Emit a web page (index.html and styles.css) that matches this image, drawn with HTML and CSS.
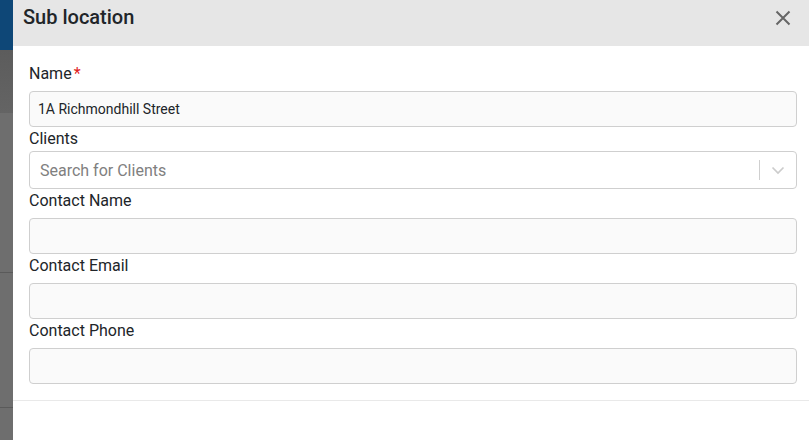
FILE: index.html
```html
<!DOCTYPE html>
<html lang="en">
<head>
    <meta charset="UTF-8">
    <title>Sub location</title>
    <link rel="stylesheet" href="styles.css">
</head>
<body>
<div class="page">
    <div class="backdrop">
        <div class="bd-nav"></div>
        <div class="bd-bar"></div>
        <div class="bd-row bd-row-1"></div>
        <div class="bd-row"></div>
        <div class="bd-rest"></div>
    </div>
    <div class="modal">
        <div class="modal-head">
            <h4 class="modal-title">Sub location</h4>
            <a href="javascript:;" class="close">
                <svg width="16" height="16" viewBox="0 0 16 16"><path d="M1.5 1.5L14.5 14.5M14.5 1.5L1.5 14.5" stroke="#666" stroke-width="2" fill="none"/></svg>
            </a>
        </div>
        <div class="modal-body">
            <label class="label">Name<span class="req">*</span></label>
            <input class="field" type="text" value="1A Richmondhill Street">

            <label class="label label-tight">Clients</label>
            <div class="select">
                <span class="placeholder">Search for Clients</span>
                <span class="sep"></span>
                <span class="chevron">
                    <svg width="20" height="20" viewBox="0 0 20 20"><path d="M4.5 7.5l5.5 5.5 5.5-5.5" stroke="#ccc" stroke-width="1.7" fill="none"/></svg>
                </span>
            </div>

            <label class="label">Contact Name</label>
            <input class="field" type="text">

            <label class="label">Contact Email</label>
            <input class="field" type="text">

            <label class="label">Contact Phone</label>
            <input class="field" type="text">
        </div>
        <div class="modal-foot"></div>
    </div>
</div>
</body>
</html>
```

FILE: styles.css
```css
*{margin:0;padding:0;box-sizing:border-box;}
html,body{height:100%;}
body{
    overflow:hidden;
    font-family:Roboto,"Liberation Sans",sans-serif;
    color:#212529;
    background:#fff;
}
.page{display:flex;height:440px;}

/* dimmed page behind the dialog */
.backdrop{width:13px;flex-shrink:0;display:flex;flex-direction:column;background:#6e6e6e;}
.bd-nav{height:50px;background:#0e4777;}
.bd-bar{height:63px;background:linear-gradient(#5c5c5c,#646464);}
.bd-row{height:135px;border-bottom:1px solid #5a5a5a;}
.bd-row-1{height:160px;}
.bd-rest{flex:1;}

.modal{width:800px;flex-shrink:0;display:flex;flex-direction:column;background:#fff;}
.modal-head{
    height:46px;
    background:#e6e6e6;
    display:flex;
    align-items:flex-start;
    justify-content:space-between;
    padding:2px 22px 0 10px;
}
.modal-title{font-size:20px;font-weight:500;line-height:30px;color:#212529;}
.close{display:block;margin-top:8px;line-height:0;}

.modal-body{padding:16px;display:flex;flex-direction:column;border-bottom:1px solid #e9e9e9;}
.label{font-size:16px;line-height:24px;margin-bottom:5px;color:#212529;}
.label-tight{margin-bottom:0;}
.req{color:#e02020;margin-left:2px;}

.field{
    height:36px;
    border:1px solid #cfcfcf;
    border-radius:4px;
    background:#fafafa;
    padding:0 8px;
    font-family:Roboto,"Liberation Sans",sans-serif;
    font-size:14px;
    color:#212529;
    outline:none;
}

.select{
    height:38px;
    border:1px solid #cfcfcf;
    border-radius:4px;
    background:#fff;
    display:flex;
    align-items:center;
}
.placeholder{flex:1;padding-left:10px;font-size:16px;color:#808080;}
.sep{width:1px;height:20px;background:#cfcfcf;}
.chevron{width:36px;display:flex;justify-content:center;line-height:0;}

.modal-foot{flex:1;}
```
